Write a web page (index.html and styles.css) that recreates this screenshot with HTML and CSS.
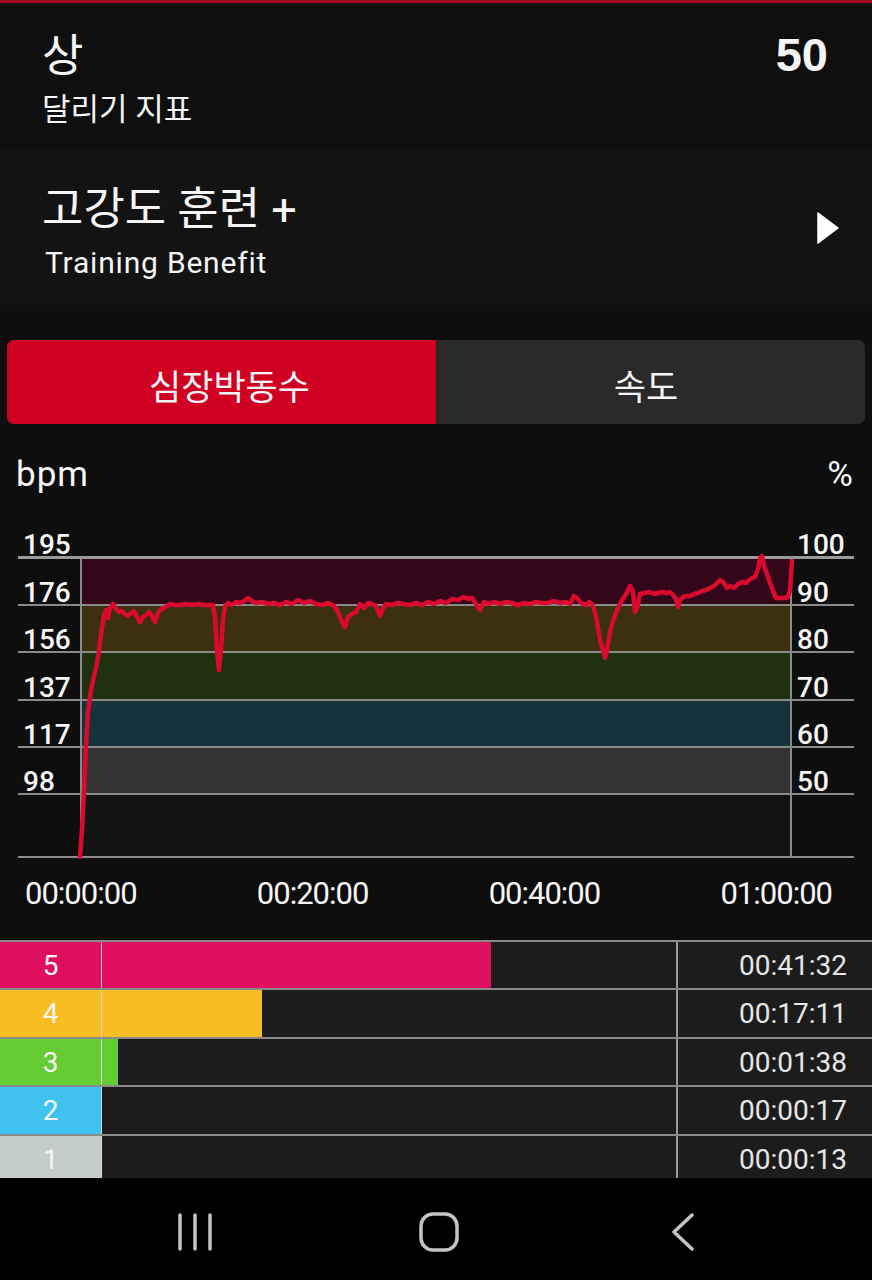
FILE: index.html
```html
<!DOCTYPE html>
<html lang="ko">
<head>
  <meta charset="UTF-8">
  <title>심장박동수</title>
  <meta name="viewport" content="width=device-width, initial-scale=1.0">
  <link rel="stylesheet" href="styles.css">
</head>
<body>
  <div class="screen">
    <section class="card metric">
      <div>
        <div class="title">상</div>
        <div class="subtitle">달리기 지표</div>
      </div>
      <div class="score">50</div>
    </section>

    <section class="card benefit">
      <div class="benefit-text">
        <div class="title">고강도 훈련 +</div>
        <div class="subtitle en">Training Benefit</div>
      </div>
      <svg class="arrow" width="22" height="32" viewBox="0 0 22 32">
        <polygon points="1,1 21,16 1,31" fill="#fff" stroke="#fff" stroke-width="1.5" stroke-linejoin="round"/>
      </svg>
    </section>

    <div class="tabs">
      <div class="tab active"><span>심장박동수</span></div>
      <div class="tab"><span>속도</span></div>
    </div>

    <div class="units"><span>bpm</span><span>%</span></div>

    <div class="plot">
      <div class="row head"><span class="lbl">195</span><span class="band"></span><span class="lbl">100</span></div>
      <div class="row"><span class="lbl">176</span><span class="band z5"></span><span class="lbl">90</span></div>
      <div class="row"><span class="lbl">156</span><span class="band z4"></span><span class="lbl">80</span></div>
      <div class="row"><span class="lbl">137</span><span class="band z3"></span><span class="lbl">70</span></div>
      <div class="row"><span class="lbl">117</span><span class="band z2"></span><span class="lbl">60</span></div>
      <div class="row"><span class="lbl">98</span><span class="band z1"></span><span class="lbl">50</span></div>
      <div class="row base"><span class="lbl"></span><span class="band z0"></span><span class="lbl"></span></div>

      <svg class="hr-line" viewBox="80 559 712 299" width="712" height="299">
        <path d="M80,857 L82,830 L84,790 L86,745 L88,712 L91,690 L94,676 L96,668 L98,657 L100,642 L102,628 L104,615 L106,610 L108,618 L110,608 L113,604 L116,609 L119,612 L122,611 L125,614 L128,616 L131,613 L134,611 L137,617 L140,622 L143,617 L146,615 L149,612 L152,616 L155,622 L158,613 L161,609 L164,608 L167,606 L170,604 L175,605 L180,605 L186,604 L192,605 L198,604 L204,605 L210,605 L213,605 L215,618 L217,650 L219,670 L221,650 L223,620 L225,606 L228,603 L232,605 L236,602 L240,603 L244,601 L248,598 L252,601 L256,603 L262,602 L268,604 L274,603 L280,605 L286,602 L292,604 L298,600 L304,603 L310,601 L316,604 L322,605 L328,603 L334,606 L338,612 L342,622 L345,627 L348,617 L352,614 L356,612 L360,604 L364,608 L368,603 L372,604 L376,606 L380,616 L383,608 L386,604 L392,605 L398,603 L404,604 L410,605 L416,603 L422,605 L428,602 L434,604 L440,601 L446,603 L452,599 L458,600 L464,597 L468,599 L472,598 L476,604 L480,610 L484,602 L488,604 L494,602 L500,604 L506,602 L512,603 L518,605 L524,603 L530,604 L536,602 L542,603 L548,603 L554,601 L560,603 L566,602 L570,604 L574,596 L577,598 L580,602 L583,604 L586,605 L589,602 L592,604 L595,612 L597,622 L600,640 L603,650 L605,658 L607,650 L610,632 L614,618 L618,608 L622,600 L626,594 L630,586 L633,592 L635,612 L637,608 L640,594 L644,593 L650,592 L654,594 L658,593 L662,592 L666,593 L670,592 L673,595 L676,599 L678,607 L680,600 L683,597 L686,596 L690,596 L694,594 L698,593 L702,591 L706,590 L710,588 L714,586 L717,583 L720,580 L724,583 L727,588 L730,586 L734,588 L738,584 L742,582 L746,583 L749,580 L752,578 L755,577 L758,569 L760,558 L762,556 L764,566 L767,574 L770,583 L773,591 L776,598 L780,598 L784,598 L788,597 L790,590 L791,575 L792,561"/>
      </svg>
    </div>

    <div class="times">
      <span>00:00:00</span>
      <span>00:20:00</span>
      <span>00:40:00</span>
      <span>01:00:00</span>
    </div>

    <div class="zones">
      <div class="zone">
        <div class="num z5">5</div>
        <div class="track"><div class="fill z5" style="width:67.8%"></div></div>
        <div class="time">00:41:32</div>
      </div>
      <div class="zone">
        <div class="num z4">4</div>
        <div class="track"><div class="fill z4" style="width:27.8%"></div></div>
        <div class="time">00:17:11</div>
      </div>
      <div class="zone">
        <div class="num z3">3</div>
        <div class="track"><div class="fill z3" style="width:2.8%"></div></div>
        <div class="time">00:01:38</div>
      </div>
      <div class="zone">
        <div class="num z2">2</div>
        <div class="track"><div class="fill z2" style="width:0%"></div></div>
        <div class="time">00:00:17</div>
      </div>
      <div class="zone">
        <div class="num z1">1</div>
        <div class="track"><div class="fill z1" style="width:0%"></div></div>
        <div class="time">00:00:13</div>
      </div>
    </div>

    <nav class="navbar">
      <div class="nav-item">
        <svg width="36" height="38" viewBox="0 0 36 38" fill="none" stroke="#c4c4c4" stroke-width="3.5" stroke-linecap="round">
          <line x1="3" y1="2" x2="3" y2="36"/>
          <line x1="18" y1="2" x2="18" y2="36"/>
          <line x1="33" y1="2" x2="33" y2="36"/>
        </svg>
      </div>
      <div class="nav-item">
        <svg width="40" height="40" viewBox="0 0 40 40" fill="none" stroke="#c4c4c4" stroke-width="3.5">
          <rect x="2" y="2" width="36" height="36" rx="12"/>
        </svg>
      </div>
      <div class="nav-item">
        <svg width="24" height="38" viewBox="0 0 24 38" fill="none" stroke="#c4c4c4" stroke-width="3.5" stroke-linecap="round" stroke-linejoin="round">
          <polyline points="21,2 3,19 21,36"/>
        </svg>
      </div>
    </nav>
  </div>
</body>
</html>
```

FILE: styles.css
```css
:root {
  --bg: #0e0e0e;
  --card-bg: #0f0f0f;
  --card-alt: #131313;
  --text: #f5f5f5;
  --accent: #cf0022;
  --grid: #8a8a8a;
  --track: #1c1c1c;
}

* {
  box-sizing: border-box;
}

body {
  margin: 0;
  background: var(--bg);
  color: var(--text);
  font-family: Roboto, "Noto Sans CJK KR", sans-serif;
}

.screen {
  width: 872px;
  height: 1280px;
  overflow: hidden;
  display: flex;
  flex-direction: column;
}

/* top cards */
.card {
  display: flex;
  justify-content: space-between;
  flex-shrink: 0;
}

.metric {
  height: 150px;
  background: var(--card-bg);
  border-top: 3px solid #a10c24;
  padding: 27px 44px 0 42px;
}

.benefit {
  height: 155px;
  background: var(--card-alt);
  align-items: center;
  padding: 0 33px 0 42px;
}

.benefit-text {
  padding-top: 8px;
}

.title {
  font-size: 45px;
  line-height: 54px;
}

.subtitle {
  font-size: 31px;
  line-height: 36px;
  margin-top: 8px;
}

.subtitle.en {
  font-size: 30px;
  line-height: 34px;
  margin-top: 9px;
  margin-left: 3px;
  letter-spacing: 0.8px;
}

.score {
  font-family: "Liberation Sans", Arial, sans-serif;
  font-weight: 700;
  font-size: 47px;
  line-height: 54px;
  margin-top: -2px;
}

/* tabs */
.tabs {
  display: flex;
  flex-shrink: 0;
  height: 84px;
  margin: 35px 7px 0;
  border-radius: 7px;
  overflow: hidden;
  background: #2a2a2a;
}

.tab {
  flex: 1;
  display: flex;
  align-items: center;
  justify-content: center;
  padding-top: 4px;
  font-size: 35px;
}

.tab.active {
  background: var(--accent);
}

.tab.active span {
  margin-left: 16px;
}

.tab span {
  margin-right: 9px;
}

.tab.active span {
  margin-right: 0;
}

/* chart */
.units {
  display: flex;
  justify-content: space-between;
  margin: 31px 18px 0 16px;
  font-size: 35px;
  line-height: 40px;
  letter-spacing: 1px;
}

.plot {
  position: relative;
  margin: 0 18px;
}

.row {
  display: grid;
  grid-template-columns: 62px 1fr 62px;
  height: 47.2px;
  border-bottom: 2px solid var(--grid);
}

.row.head {
  height: 64px;
  border-bottom: 3px solid #9a9a9a;
}

.row.base {
  height: 63px;
}

.band {
  border-left: 2px solid var(--grid);
  border-right: 2px solid var(--grid);
}

.head .band {
  border: 0;
}

.band.z5 { background: #33061a; }
.band.z4 { background: #3c300e; }
.band.z3 { background: #1f310f; }
.band.z2 { background: #15323d; }
.band.z1 { background: #333333; }
.band.z0 { background: #131313; }

.lbl {
  align-self: end;
  padding-left: 5px;
  font-size: 28px;
  line-height: 22px;
  font-weight: 500;
}

.hr-line {
  position: absolute;
  left: 62px;
  top: 64px;
  overflow: visible;
}

.hr-line path {
  fill: none;
  stroke: #da0a2e;
  stroke-width: 4.5;
  stroke-linejoin: round;
  stroke-linecap: round;
}

.times {
  display: flex;
  justify-content: space-between;
  margin: 18px 40px 0 25px;
  font-size: 31px;
  line-height: 36px;
  letter-spacing: -1px;
}

/* zone table */
.zones {
  flex-shrink: 0;
  height: 238px;
  margin-top: 28px;
  overflow: hidden;
}

.zone {
  display: flex;
  height: 48.5px;
  border-top: 2px solid var(--grid);
}

.num {
  width: 102px;
  display: flex;
  align-items: center;
  justify-content: center;
  border-right: 1px solid #d8d8d8;
  font-size: 28px;
}

.track {
  flex: 1;
  background: var(--track);
}

.fill {
  height: 100%;
}

.z5.num, .fill.z5 { background: #df0f5f; }
.z4.num, .fill.z4 { background: #f7bd22; }
.z3.num, .fill.z3 { background: #66cc33; }
.z2.num, .fill.z2 { background: #3fc3ee; }
.z1.num, .fill.z1 { background: #c4cbcb; }

.time {
  width: 196px;
  display: flex;
  align-items: center;
  justify-content: flex-end;
  padding-right: 25px;
  border-left: 2px solid #9a9a9a;
  background: var(--track);
  font-size: 28px;
  color: #e6e6e6;
}

/* system nav */
.navbar {
  flex-shrink: 0;
  height: 102px;
  background: #000;
  display: flex;
  justify-content: center;
  align-items: center;
  padding: 6px 0 0 6px;
}

.nav-item {
  width: 244px;
  display: flex;
  justify-content: center;
}
```
